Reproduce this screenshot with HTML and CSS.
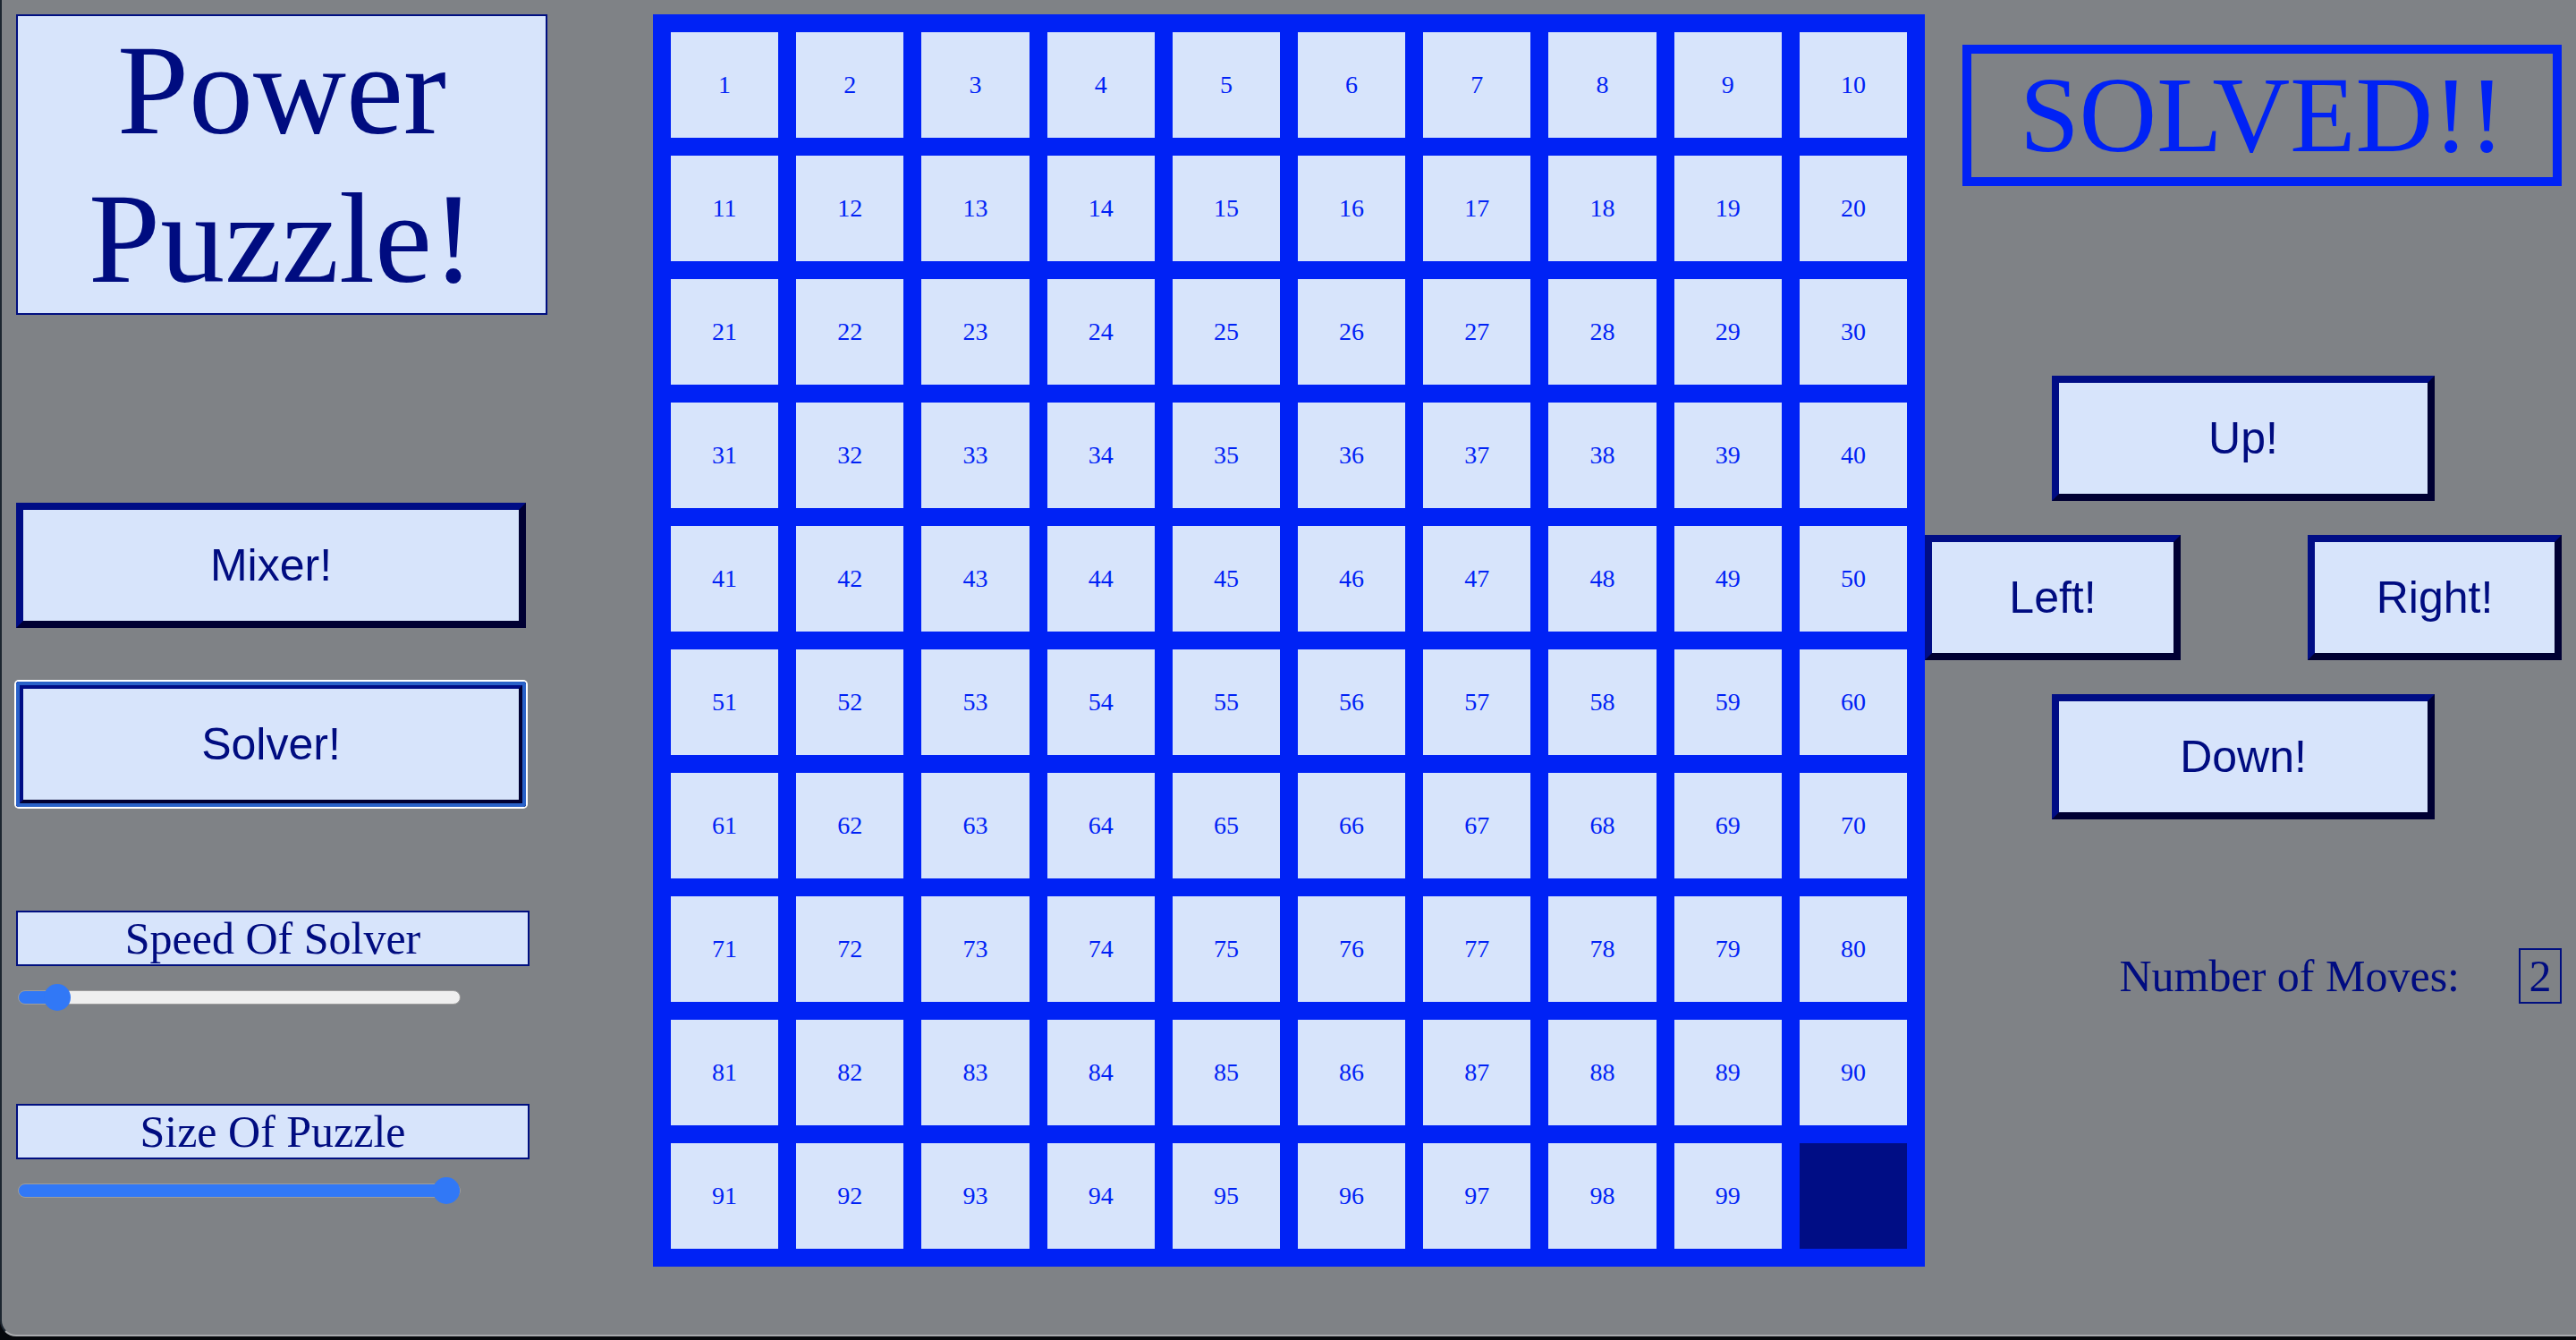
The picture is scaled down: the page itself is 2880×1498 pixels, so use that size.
FILE: index.html
```html
<!DOCTYPE html>
<html lang="en">

<head>
    <meta charset="UTF-8">
    <meta name="viewport" content="width=device-width, initial-scale=1.0">
    <title>Power Puzzle</title>
    <link rel="stylesheet" href="styles.css">
</head>

<body>
    <div class="page">
        <div class="sidebar">
            <h1 class="title">Power<br>Puzzle!</h1>

            <button class="btn mixer">Mixer!</button>
            <button class="btn mixer solver">Solver!</button>

            <div class="label speed-label">Speed Of Solver</div>
            <input type="range" class="slider" id="speed" min="1" max="100" value="7" style="--fill: 9%">

            <div class="label size-label">Size Of Puzzle</div>
            <input type="range" class="slider" id="size" min="3" max="10" value="10" style="--fill: 100%">
        </div>

        <div class="board" id="board"></div>

        <div class="controls">
            <div class="status">SOLVED!!</div>

            <div class="arrows">
                <button class="btn vertical">Up!</button>
                <div class="arrow-row">
                    <button class="btn side">Left!</button>
                    <button class="btn side right">Right!</button>
                </div>
                <button class="btn vertical">Down!</button>
            </div>

            <div class="moves">
                <span>Number of Moves:</span>
                <span class="count" id="moves">2</span>
            </div>
        </div>
    </div>

    <script>
        const size = 10;
        const board = document.getElementById('board');

        for (let i = 1; i <= size * size; i++) {
            const tile = document.createElement('div');
            if (i === size * size) {
                tile.className = 'tile empty';
            } else {
                tile.className = 'tile';
                tile.innerText = i;
            }
            board.appendChild(tile);
        }
    </script>
</body>

</html>
```

FILE: styles.css
```css
html {
    background: #05080c;
}

body {
    margin: 0;
    font-family: "Liberation Serif", "Times New Roman", serif;
    color: #000c80;
}

.page {
    box-sizing: border-box;
    height: 1494px;
    display: flex;
    padding: 16px 16px 0 16px;
    background: #7f8286;
    border-left: 2px solid #1c2630;
    border-bottom: 2px solid #a9abae;
    border-bottom-left-radius: 18px;
}

/* left column */

.sidebar {
    width: 594px;
    display: flex;
    flex-direction: column;
    align-items: flex-start;
}

.title {
    box-sizing: border-box;
    width: 594px;
    margin: 0;
    font-size: 144px;
    font-weight: normal;
    line-height: 166px;
    text-align: center;
    background: #d7e4fb;
    border: 2px solid #000f80;
}

.btn {
    box-sizing: border-box;
    height: 140px;
    padding: 0;
    font-family: "Liberation Sans", Arial, sans-serif;
    font-size: 50px;
    color: #000c80;
    background: #d7e4fb;
    border: 8px solid;
    border-color: #000d85 #000033 #000033 #000d85;
    cursor: pointer;
}

.mixer {
    width: 570px;
    margin-top: 210px;
}

.solver {
    margin-top: 60px;
    outline: 4px solid #2a62c9;
    outline-offset: -4px;
    box-shadow: 0 0 0 2px #ffffff;
    border-radius: 3px;
}

.label {
    box-sizing: border-box;
    width: 574px;
    font-size: 50px;
    text-align: center;
    background: #d7e4fb;
    border: 2px solid #000f80;
}

.speed-label {
    margin-top: 116px;
}

.size-label {
    margin-top: 104px;
}

.slider {
    -webkit-appearance: none;
    appearance: none;
    width: 495px;
    height: 30px;
    margin: 20px 0 0 2px;
    background: transparent;
}

.slider::-webkit-slider-runnable-track {
    box-sizing: border-box;
    height: 16px;
    border-radius: 8px;
    border: 1px solid #9d9d9d;
    background: linear-gradient(to right, #3178f6 var(--fill), #efefef var(--fill));
}

.slider::-webkit-slider-thumb {
    -webkit-appearance: none;
    appearance: none;
    width: 30px;
    height: 30px;
    margin-top: -8px;
    border: none;
    border-radius: 50%;
    background: #3178f6;
}

/* board */

.board {
    box-sizing: border-box;
    width: 1422px;
    height: 1400px;
    margin-left: 118px;
    padding: 20px;
    display: grid;
    grid-template-columns: repeat(10, 1fr);
    grid-template-rows: repeat(10, 1fr);
    gap: 20px;
    background: #0022f5;
}

.tile {
    display: flex;
    align-items: center;
    justify-content: center;
    font-size: 28px;
    color: #0022f5;
    background: #d7e4fb;
}

.tile.empty {
    background: #000d85;
}

/* right column */

.controls {
    width: 712px;
    display: flex;
    flex-direction: column;
    align-items: flex-end;
}

.status {
    box-sizing: border-box;
    width: 670px;
    margin-top: 34px;
    font-size: 120px;
    line-height: 138px;
    text-align: center;
    color: #0022f5;
    border: 10px solid #0022f5;
}

.arrows {
    width: 712px;
    margin-top: 212px;
    display: flex;
    flex-direction: column;
    align-items: center;
    gap: 38px;
}

.vertical {
    width: 428px;
}

.arrow-row {
    width: 100%;
    display: flex;
    justify-content: space-between;
}

.side {
    width: 286px;
}

.side.right {
    width: 284px;
}

.moves {
    margin-top: 144px;
    display: flex;
    align-items: baseline;
    gap: 66px;
    font-size: 50px;
}

.count {
    box-sizing: border-box;
    width: 48px;
    text-align: center;
    border: 2px solid #000f80;
}
```
